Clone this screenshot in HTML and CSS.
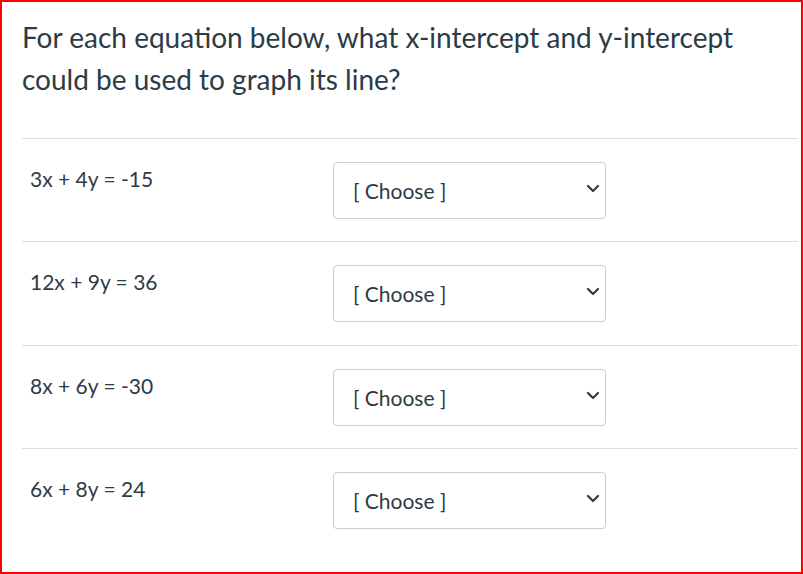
FILE: index.html
```html
<!DOCTYPE html>
<html>
<head>
<meta charset="utf-8">
<link rel="stylesheet" href="styles.css">
</head>
<body>
<div class="frame">
  <p class="question">For each equation below, what x-intercept and y-intercept could be used to graph its line?</p>
  <div class="rows">
    <div class="row">
      <div class="eq">3x + 4y = -15</div>
      <div class="sel-wrap">
        <select class="sel"><option>[ Choose ]</option></select>
        <svg class="chev" width="14" height="9" viewBox="0 0 14 9"><path d="M2 2 L7 7 L12 2" fill="none" stroke="#2d3b45" stroke-width="2.2" stroke-linecap="round" stroke-linejoin="round"/></svg>
      </div>
    </div>
    <div class="row">
      <div class="eq">12x + 9y = 36</div>
      <div class="sel-wrap">
        <select class="sel"><option>[ Choose ]</option></select>
        <svg class="chev" width="14" height="9" viewBox="0 0 14 9"><path d="M2 2 L7 7 L12 2" fill="none" stroke="#2d3b45" stroke-width="2.2" stroke-linecap="round" stroke-linejoin="round"/></svg>
      </div>
    </div>
    <div class="row">
      <div class="eq">8x + 6y = -30</div>
      <div class="sel-wrap">
        <select class="sel"><option>[ Choose ]</option></select>
        <svg class="chev" width="14" height="9" viewBox="0 0 14 9"><path d="M2 2 L7 7 L12 2" fill="none" stroke="#2d3b45" stroke-width="2.2" stroke-linecap="round" stroke-linejoin="round"/></svg>
      </div>
    </div>
    <div class="row">
      <div class="eq">6x + 8y = 24</div>
      <div class="sel-wrap">
        <select class="sel"><option>[ Choose ]</option></select>
        <svg class="chev" width="14" height="9" viewBox="0 0 14 9"><path d="M2 2 L7 7 L12 2" fill="none" stroke="#2d3b45" stroke-width="2.2" stroke-linecap="round" stroke-linejoin="round"/></svg>
      </div>
    </div>
  </div>
</div>
</body>
</html>
```
FILE: styles.css
```css
html, body {
  margin: 0;
  padding: 0;
  background: #fff;
}
.frame {
  box-sizing: border-box;
  width: 803px;
  height: 574px;
  border: 2px solid #ff0000;
  padding: 0 3px 0 20px;
  font-family: Lato, "Open Sans", sans-serif;
  color: #2d3b45;
  overflow: hidden;
}
.question {
  margin: 0;
  padding-top: 14px;
  padding-bottom: 38px;
  font-size: 28px;
  line-height: 42px;
  border-bottom: 1px solid #dcdfe2;
}
.row {
  display: flex;
  align-items: flex-start;
  padding: 23px 0 22px 8px;
  border-bottom: 1px solid #dcdfe2;
}
.row:nth-child(2) {
  padding-bottom: 23px;
}
.row:last-child {
  border-bottom: none;
}
.eq {
  width: 303px;
  padding-top: 5px;
  font-size: 21px;
  line-height: 24px;
}
.sel-wrap {
  position: relative;
}
.sel {
  appearance: none;
  -webkit-appearance: none;
  box-sizing: border-box;
  width: 273px;
  height: 57px;
  border: 1px solid #c7cdd1;
  border-radius: 4px;
  background: #fff;
  padding: 0 0 0 19px;
  font-family: Lato, "Open Sans", sans-serif;
  font-size: 21px;
  color: #2d3b45;
}
.chev {
  position: absolute;
  right: 6px;
  top: 22px;
  pointer-events: none;
}
```
